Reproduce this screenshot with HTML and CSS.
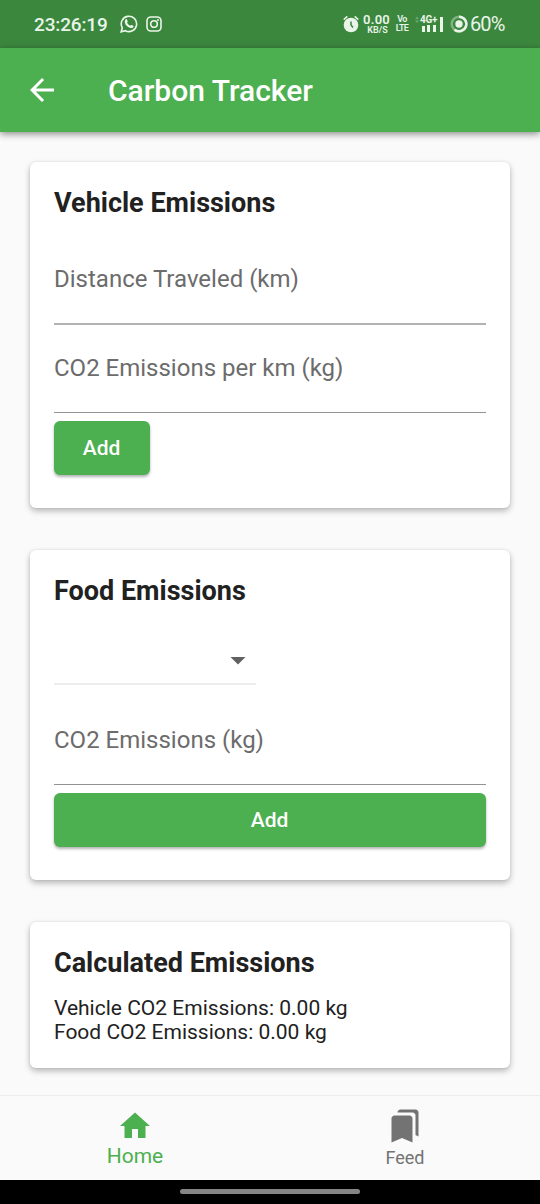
FILE: index.html
```html
<!DOCTYPE html>
<html lang="en">
<head>
<meta charset="utf-8">
<title>Carbon Tracker</title>
<link rel="stylesheet" href="styles.css">
</head>
<body>
<div class="screen">
  <div class="status">
    <span class="clock">23:26:19</span>
    <svg class="chat" width="18" height="18" viewBox="0 0 18 18"><path d="M1.2 16.8l1.1-4A7.7 7.7 0 1 1 5.300 15.700z" fill="none" stroke="currentColor" stroke-width="1.600"/><path d="M5.300 4.800c.8-1 1.500-.8 1.800 0l.6 1.400c.2.600-.7 1-.5 1.500.6 1.400 1.700 2.300 3 2.900.6.200 1-.9 1.600-.7l1.500.8c.7.400.2 1.600-.6 2-2 1.100-4.700-.3-6.200-1.900C5.200 9.400 4.100 6.500 5.300 4.800z" fill="currentColor"/></svg>
    <svg class="camera" width="16" height="16" viewBox="0 0 16 16"><g fill="none" stroke="currentColor" stroke-width="1.600"><rect x="1" y="1" width="14" height="14" rx="3.800"/><circle cx="8" cy="8" r="3.300"/></g><circle cx="12" cy="4" r="1" fill="currentColor"/></svg>
    <span class="spacer"></span>
    <svg class="alarm" width="16" height="18" viewBox="0 0 16 18"><circle cx="8" cy="10" r="7.300" fill="currentColor"/><path d="M.7 4.600L4.300 1.400M15.300 4.600l-3.600-3.200" stroke="currentColor" stroke-width="1.500"/><path d="M8 6.500V10l2 2.500" fill="none" stroke="#3b873e" stroke-width="1.500"/></svg>
    <span class="speed"><b>0.00</b><i>KB/S</i></span>
    <span class="volte"><b>Vo</b><b>LTE</b></span>
    <span class="signal">
      <svg width="30" height="18" viewBox="0 0 30 18"><g fill="currentColor"><path d="M7 11h3v6H7zM12 10h3v7h-3zM18 6h3v11h-3zM25 2h3v15h-3z"/><path opacity=".3" d="M0 4l2-2.500L4 4zM0 5.500h4L2 8z"/></g></svg>
      <b>4G+</b>
    </span>
    <svg class="battery" width="18" height="18" viewBox="0 0 18 18"><circle cx="9" cy="9" r="7.300" fill="none" stroke="currentColor" stroke-width="2.500" opacity=".4"/><path d="M9 1.700A7.300 7.300 0 1 1 4.500 14.700" fill="none" stroke="currentColor" stroke-width="2.500"/><circle cx="9" cy="9" r="3.700" fill="currentColor"/></svg>
    <span class="percent">60%</span>
  </div>
  <header class="appbar">
    <svg class="back" width="36" height="36" viewBox="0 0 24 24"><path fill="currentColor" d="M20 11H7.830l5.590-5.590L12 4l-8 8 8 8 1.410-1.410L7.830 13H20z"/></svg>
    <h1>Carbon Tracker</h1>
  </header>
  <main class="content">
    <section class="card vehicle">
      <h2>Vehicle Emissions</h2>
      <div class="field distance">Distance Traveled (km)</div>
      <div class="field rate">CO2 Emissions per km (kg)</div>
      <button class="add">Add</button>
    </section>
    <section class="card food">
      <h2>Food Emissions</h2>
      <div class="select"><svg width="36" height="36" viewBox="0 0 24 24"><path fill="currentColor" d="M7 10l5 5 5-5z"/></svg></div>
      <div class="field amount">CO2 Emissions (kg)</div>
      <button class="add wide">Add</button>
    </section>
    <section class="card totals">
      <h2>Calculated Emissions</h2>
      <p class="tv">Vehicle CO2 Emissions: 0.00 kg</p>
      <p class="tf">Food CO2 Emissions: 0.00 kg</p>
    </section>
  </main>
  <nav class="tabs">
    <div class="tab active"><svg width="36" height="36" viewBox="0 0 24 24"><path fill="currentColor" d="M10 20v-6h4v6h5v-8h3L12 3 2 12h3v8z"/></svg><span>Home</span></div>
    <div class="tab feed"><svg width="36" height="36" viewBox="0 0 24 24"><path fill="currentColor" d="M19 18l2 1V3c0-1.100-.9-2-2-2H8.990C7.890 1 7 1.900 7 3h10c1.100 0 2 .9 2 2v13zM15 5H5c-1.100 0-2 .9-2 2v16l7-3 7 3V7c0-1.100-.9-2-2-2z"/></svg><span>Feed</span></div>
  </nav>
  <div class="gesture"><span></span></div>
</div>
</body>
</html>
```
FILE: styles.css
```css
* { box-sizing: border-box; margin: 0; padding: 0; }
body { font-family: Roboto, "Noto Sans", sans-serif; background: #fafafa; color: #212121; }
svg { display: block; flex: none; }
.screen { width: 540px; height: 1204px; display: flex; flex-direction: column; overflow: hidden; white-space: nowrap; }
.status { height: 48px; flex: none; background: #3b873e; color: #e9f5e9; display: flex; align-items: center; padding: 0 35px 0 34px; }
.clock { width: 86px; font: 500 19px/24px Roboto, sans-serif; letter-spacing: -.15px; padding-top: 1px; }
.camera { margin-left: 8px; }
.spacer { flex: 1; }
.speed { width: 29px; margin-left: 3px; display: flex; flex-direction: column; align-items: center; }
.speed b { font: 600 13px/12px Roboto, sans-serif; letter-spacing: .3px; }
.speed i { font: 600 9px/8px Roboto, sans-serif; margin-left: 2px; }
.volte { width: 12px; margin-left: 5px; display: flex; flex-direction: column; align-items: center; }
.volte b { font: 600 9px/9px Roboto, sans-serif; letter-spacing: -.7px; }
.signal { position: relative; margin-left: 7px; }
.signal b { position: absolute; left: 5px; top: 0; font: 700 10px/10px Roboto, sans-serif; letter-spacing: -.3px; background: #3b873e; }
.battery { margin-left: 5px; }
.percent { width: 35px; margin-left: 2px; font-size: 20px; letter-spacing: -.9px; line-height: 24px; }
.appbar { position: relative; z-index: 1; height: 84px; flex: none; display: flex; align-items: center; gap: 48px; padding-left: 24px; background: #4caf50; color: #fff; box-shadow: 0 2px 7px rgba(0,0,0,.45); }
h1 { font: 500 30px/36px Roboto, sans-serif; padding-top: 2px; }
.content { flex: 1; display: flex; flex-direction: column; gap: 42px; padding: 30px 30px 0; }
.card { background: #fff; border-radius: 6px; padding: 23px 24px; box-shadow: 0 3px 6px rgba(0,0,0,.27), 0 0 3px rgba(0,0,0,.08); flex: none; }
.vehicle { height: 346px; }
.food { height: 330px; }
.totals { height: 146px; }
h2 { font: 700 27px/36px Roboto, sans-serif; }
.field { border-bottom: 1px solid #929292; color: #6c6c6c; font-size: 24px; line-height: 30px; padding-top: 29px; }
.distance { margin-top: 14px; height: 90px; border-bottom: 2px solid #b2b2b2; }
.rate { height: 88px; padding-top: 28px; }
.add { display: block; margin-top: 8px; width: 96px; height: 54px; border: 0; border-radius: 6px; background: #4caf50; color: #fff; font: 500 21px/54px Roboto, sans-serif; text-indent: -1px; box-shadow: 0 2px 3px rgba(0,0,0,.3); }
.wide { width: 100%; }
.select { width: 202px; height: 72px; margin-top: 4px; border-bottom: 2px solid #ededed; color: #616161; display: flex; justify-content: flex-end; padding-top: 29px; }
.amount { margin-top: 11px; height: 89px; }
.totals p { font-size: 21px; line-height: 24px; }
.totals .tv { margin-top: 15px; }
.tabs { height: 85px; flex: none; display: flex; background: #fafafa; border-top: 1px solid #ededed; }
.tab { width: 270px; display: flex; flex-direction: column; align-items: center; color: #737373; padding-top: 12px; }
.tab span { font-size: 18px; line-height: 24px; margin-top: 2px; }
.active { color: #4caf50; }
.active span { font-size: 21px; margin-top: 0; }
.gesture { height: 24px; flex: none; background: #000; display: flex; justify-content: center; align-items: center; padding-bottom: 2px; }
.gesture span { width: 180px; height: 5px; border-radius: 3px; background: #858585; }
```
